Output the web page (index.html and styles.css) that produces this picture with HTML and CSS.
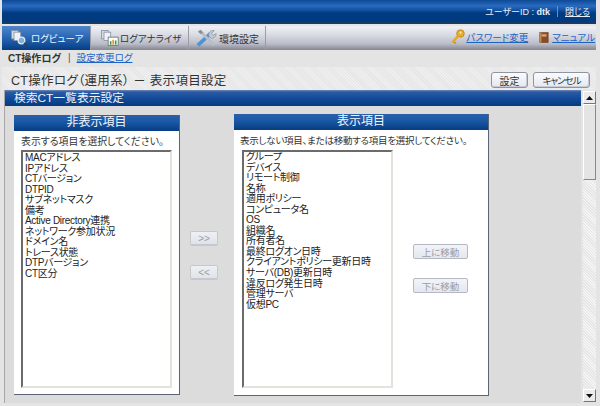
FILE: index.html
```html
<!DOCTYPE html>
<html lang="ja">
<head>
<meta charset="utf-8">
<title>CT操作ログ</title>
<link rel="stylesheet" href="styles.css">
</head>
<body>
<div class="page">
  <header class="topbar">
    <span class="user">ユーザーID : <b>dtk</b></span>
    <span class="sep"></span>
    <a class="close">閉じる</a>
  </header>
  <nav class="tabs">
    <div class="tab active">
      <svg class="tabicon" viewBox="0 0 24 20"><rect x="3" y="1" width="8" height="10" fill="#d8dde6" stroke="#8a93a3"/><rect x="6" y="3" width="8" height="10" fill="#f0f2f6" stroke="#8a93a3"/><circle cx="15" cy="13" r="4" fill="#7fb0dd" stroke="#e8edf4" stroke-width="1.5"/><path d="M18 16l4 3" stroke="#3b3f46" stroke-width="2.2"/></svg>
      <span>ログビューア</span>
    </div>
    <div class="tab second">
      <svg class="tabicon" viewBox="0 0 24 20"><rect x="3" y="1" width="8" height="10" fill="#d8dde6" stroke="#8a93a3"/><rect x="6" y="3" width="8" height="10" fill="#f0f2f6" stroke="#8a93a3"/><rect x="11" y="9" width="12" height="10" fill="#fff" stroke="#68707c"/><path d="M14 18v-4M20 18v-5" stroke-width="2" stroke="#3e9c3e"/><path d="M17 18v-6" stroke-width="2" stroke="#e0a020"/></svg>
      <span>ログアナライザ</span>
    </div>
    <div class="tab third">
      <svg class="tabicon wide" viewBox="0 0 24 20"><path d="M2 18L16 5" stroke="#4d93d6" stroke-width="4"/><path d="M14 8c-1-4 2-7 6-6l-3 3 2 2 3-2c0 4-3 6-6 5z" fill="#c4c9d1" stroke="#7d8490" stroke-width=".6"/><path d="M4 2l16 16" stroke="#b9bec6" stroke-width="3"/><path d="M2 3l3-2 3 3-3 2z" fill="#8d939d"/></svg>
      <span>環境設定</span>
    </div>
    <div class="tablinks">
      <svg class="linkicon" viewBox="0 0 14 16"><circle cx="9.500" cy="4.500" r="3.800" fill="#e8ad2c" stroke="#b07c14" stroke-width=".7"/><circle cx="9.500" cy="3.700" r="1.100" fill="#fbe9a8"/><path d="M7 7L1.500 13.500" stroke="#e3a829" stroke-width="2.600"/><path d="M3 13l2 1.500" stroke="#c68e1c" stroke-width="1.500"/></svg>
      <a class="link">パスワード変更</a>
      <svg class="linkicon book" viewBox="0 0 12 14"><rect x="1" y="1" width="10" height="12" fill="#8a4a22" stroke="#5c3418" stroke-width=".6"/><rect x="3" y="3" width="6" height="3" fill="#d9a066"/><rect x="1" y="1" width="2" height="12" fill="#b88a5a"/></svg>
      <a class="link">マニュアル</a>
    </div>
  </nav>
  <div class="subnav">
    <b>CT操作ログ</b><span class="pipe">|</span><a class="link">設定変更ログ</a>
  </div>
  <div class="titlebar">
    <h1>CT操作ログ（運用系） － 表示項目設定</h1>
    <div class="actions">
      <button class="btn b-set">設定</button>
      <button class="btn b-cancel">キャンセル</button>
    </div>
  </div>
  <div class="main">
    <section class="content">
      <h2 class="section">検索CT一覧表示設定</h2>
      <div class="columns">
        <div class="panel left">
          <div class="panelhead">非表示項目</div>
          <p class="hint">表示する項目を選択してください。</p>
          <ul class="list">
            <li>MACアドレス</li><li>IPアドレス</li><li>CTバージョン</li><li>DTPID</li><li>サブネットマスク</li><li>備考</li><li>Active Directory連携</li><li>ネットワーク参加状況</li><li>ドメイン名</li><li>トレース状態</li><li>DTPバージョン</li><li>CT区分</li>
          </ul>
        </div>
        <div class="shuttle">
          <button class="mini">&gt;&gt;</button>
          <button class="mini">&lt;&lt;</button>
        </div>
        <div class="panel right">
          <div class="panelhead">表示項目</div>
          <p class="hint">表示しない項目、または移動する項目を選択してください。</p>
          <div class="rightbody">
            <ul class="list">
              <li>グループ</li><li>デバイス</li><li>リモート制御</li><li>名称</li><li>適用ポリシー</li><li>コンピュータ名</li><li>OS</li><li>組織名</li><li>所有者名</li><li>最終ログオン日時</li><li>クライアントポリシー更新日時</li><li>サーバ(DB)更新日時</li><li>違反ログ発生日時</li><li>管理サーバ</li><li>仮想PC</li>
            </ul>
            <div class="movers">
              <button class="move">上に移動</button>
              <button class="move">下に移動</button>
            </div>
          </div>
        </div>
      </div>
    </section>
    <div class="scrollbar">
      <div class="arrow"><svg viewBox="0 0 7 4"><path d="M3.500 0L7 4H0z"/></svg></div>
      <div class="thumb"></div>
      <div class="track"></div>
      <div class="arrow"><svg viewBox="0 0 7 4"><path d="M0 0h7L3.500 4z"/></svg></div>
    </div>
  </div>
</div>
</body>
</html>
```

FILE: styles.css
```css
* { box-sizing: border-box; }
html, body { margin: 0; padding: 0; width: 600px; height: 406px; overflow: hidden; background: #e3e3e3; }
body { font-family: "Liberation Sans", "Noto Sans CJK JP", sans-serif; font-size: 10px; color: #222; font-feature-settings: "palt"; }
.page { height: 406px; display: flex; flex-direction: column; padding-left: 2px; background: #e4e4e4; }

.topbar {
  height: 24px; margin-right: 4px; flex: none;
  display: flex; align-items: center; justify-content: flex-end; padding: 0 6px 1px 0; gap: 7px;
  background: linear-gradient(#0d4a96 0, #2a6ac0 6px, #0e4a98 11px, #003a80 13px, #003a80 21px, #1f3a5c 23px);
  color: #e8eef6; font-size: 9px;
}
.topbar b { font-weight: bold; }
.sep { width: 1px; height: 11px; background: #6f8fb8; }
.close { text-decoration: underline; }

.tabs {
  height: 24px; margin-top: 2px; margin-right: 4px; flex: none; display: flex; align-items: stretch;
  background: linear-gradient(#f0f1f6 0, #dcdee6 8px, #b9bcc6 18px, #8b8e98 23px);
}
.tab { display: flex; align-items: center; font-size: 9.500px; color: #333; border-right: 1px solid #9a9da6; padding-left: 8px; gap: 1px; white-space: nowrap; }
.tab.active { width: 89px; padding-left: 7px; gap: 2px; color: #f2f5fa; background: linear-gradient(#4f86cc 0, #2f6ab8 10px, #0f4a94 20px, #0b3f80 23px); }
.tab.second { width: 98px; }
.tab.third { width: 77px; padding-left: 7px; font-size: 10px; }
.tabicon { width: 20px; height: 18px; flex: none; }
.tabicon.wide { width: 22px; height: 20px; }
.tablinks { margin-left: auto; display: flex; align-items: center; padding: 0 1px 2px 0; white-space: nowrap; }
.linkicon { width: 14px; height: 16px; margin-right: 1px; }
.book { width: 10px; height: 13px; margin-left: 11px; margin-right: 3px; }
.link { color: #1c63c4; text-decoration: underline; font-size: 9.500px; }

.subnav { height: 17px; flex: none; display: flex; align-items: center; padding: 0 0 3px 6px; font-size: 10px; }
.subnav b { color: #333; }
.pipe { margin: 0 6px 0 7px; color: #555; }

.titlebar {
  height: 23px; flex: none; margin-right: 4px; display: flex; align-items: center; justify-content: space-between;
  padding: 0 6px 0 9px;
  background: repeating-linear-gradient(45deg, #e6e6e6 0 1px, #efefef 1px 2px);
}
h1 { margin: 0; font-size: 12.500px; font-weight: normal; color: #333; letter-spacing: .3px; padding-top: 1px; }
.actions { display: flex; gap: 5px; padding-top: 3px; }
.btn {
  height: 16px; padding: 0; font: inherit; font-size: 10px; color: #333; border: 1px solid #8d95a3; border-radius: 3px;
  background: linear-gradient(#fafbfd, #e4e8f0);
  box-shadow: inset -1px -1px 0 #c5cad4;
}
.b-set { width: 37px; }
.b-cancel { width: 57px; font-size: 9.500px; letter-spacing: -1px; }

.main { flex: 1; min-height: 0; display: flex; padding-left: 2px; padding-right: 4px; }
.content { width: 577px; height: 313px; background: #dcdcdc; border-left: 1px solid #a8a8a8; display: flex; flex-direction: column; }
.section {
  margin: 0; height: 16px; flex: none; padding-left: 9px; color: #f0f4fa; font-size: 11.800px; font-weight: normal; line-height: 16px;
  background: linear-gradient(#7289b8 0, #2c5aa4 2px, #0f4a98 9px, #063a80 16px);
}
.columns { display: flex; align-items: flex-start; padding: 8px 0 0 9px; }
.panel { background: #fff; border-right: 1px solid #5c6478; border-bottom: 1px solid #5c6478; flex: none; }
.panel.left { width: 166px; height: 280px; margin-top: 1px; }
.panel.right { width: 255px; height: 282px; }
.panelhead {
  height: 16px; text-align: center; color: #f2f5fa; font-size: 12px; line-height: 15px;
  background: linear-gradient(#2c5fa8 0, #1b5aa8 6px, #0a3f86 15px);
}
.hint { margin: 0; padding: 4px 0 0 7px; height: 19px; font-size: 9.900px; line-height: 13px; color: #333; white-space: nowrap; }
.right .hint { height: 20px; padding-left: 6px; font-size: 9.500px; letter-spacing: -.25px; }
.list {
  list-style: none; margin: 0 0 0 7px; padding: 0 0 0 2px; width: 151px; height: 238px;
  background: #fff;
  border: 2px solid #e4e2dc; border-top-color: #6b6b6b; border-left-color: #6b6b6b;
  font-size: 10px; letter-spacing: -.3px; line-height: 10.550px; color: #222; overflow: hidden;
}
.left .list { padding-top: 1px; }
.list li { white-space: nowrap; height: 10.550px; }
.right .list { margin-left: 8px; }
.rightbody { display: flex; }
.movers { display: flex; flex-direction: column; gap: 19px; margin-left: 20px; padding-top: 94px; }
.move, .mini {
  padding: 0; font: inherit; color: #9a9ea6; border: 1px solid #b4bac4; border-radius: 2px;
  background: linear-gradient(#f2f4f8, #e4e7ee);
}
.move { width: 55px; height: 15px; font-size: 9.500px; }
.shuttle { width: 54px; flex: none; display: flex; flex-direction: column; align-items: flex-start; gap: 19px; padding: 117px 0 0 10px; }
.mini { width: 28px; height: 15px; font-size: 10px; background: linear-gradient(#eef0f6, #e0e3ea); border-color: #c4c8d0; border-bottom: 2px solid #c4c8d0; }

.scrollbar {
  width: 13px; margin-left: 2px; height: 311px; margin-top: 1px; flex: none; display: flex; flex-direction: column;
  background: repeating-linear-gradient(45deg, #e6e6e6 0 1px, #f4f4f4 1px 2px);
}
.arrow { height: 13px; flex: none; display: flex; align-items: center; justify-content: center; background: #ebebeb; border: 1px solid; border-color: #fff #777 #777 #fff; }
.arrow svg { width: 7px; height: 4px; fill: #111; }
.thumb { height: 76px; flex: none; background: #e4e4e4; border: 1px solid; border-color: #fff #888 #888 #fff; }
.track { flex: 1; }
```
